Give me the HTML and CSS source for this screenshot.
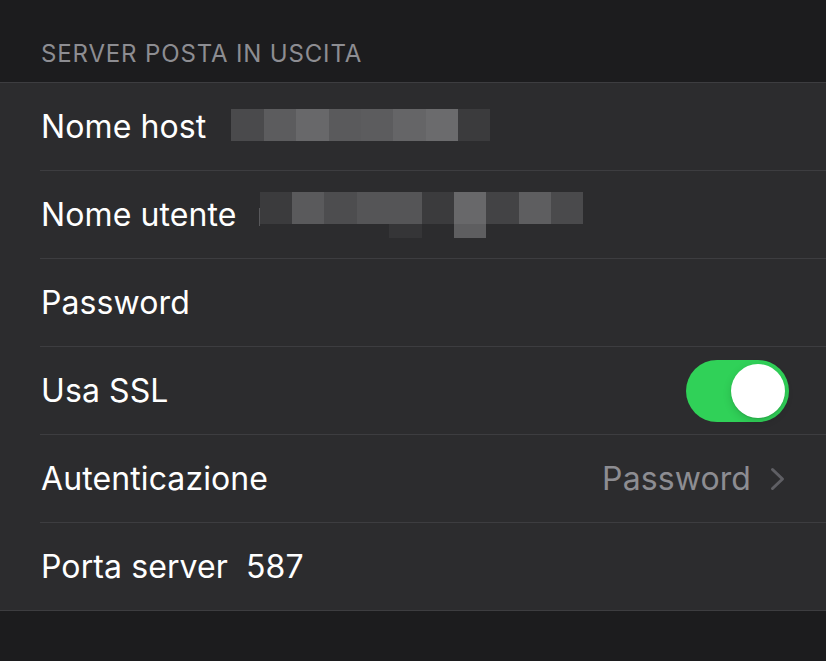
FILE: index.html
```html
<!DOCTYPE html>
<html lang="it">
<head>
  <meta charset="UTF-8" />
  <meta name="viewport" content="width=device-width, initial-scale=1.0"/>
  <title>Server posta in uscita</title>
  <link rel="stylesheet" href="styles.css">
</head>
<body>
  <div class="section-header">SERVER POSTA IN USCITA</div>
  <div class="group">
    <div class="row">
      <div class="row-inner">
        <span class="label">Nome host</span>
        <span class="blur blur-host">
          <i class="px s4"></i><i class="px s8"></i><i class="px s11"></i><i class="px s7"></i><i class="px s8"></i><i class="px s10"></i><i class="px s12"></i><i class="px s2"></i>
        </span>
      </div>
    </div>
    <div class="row">
      <div class="row-inner">
        <span class="label">Nome utente</span>
        <span class="blur blur-user">
          <span class="caret"></span>
          <span class="px-line">
            <i class="px s2"></i><i class="px s7"></i><i class="px s5"></i><i class="px s6"></i><i class="px s6"></i><i class="px s2"></i><i class="px s11"></i><i class="px s3"></i><i class="px s9"></i><i class="px s4"></i>
          </span>
          <span class="px-tail">
            <i class="px-short s1 off-4"></i><i class="px-short s9 off-6"></i>
          </span>
        </span>
      </div>
    </div>
    <div class="row">
      <div class="row-inner">
        <span class="label">Password</span>
      </div>
    </div>
    <div class="row">
      <div class="row-inner">
        <span class="label">Usa SSL</span>
        <span class="toggle on"><span class="knob"></span></span>
      </div>
    </div>
    <div class="row">
      <div class="row-inner">
        <span class="label">Autenticazione</span>
        <span class="detail">Password</span>
        <svg class="chevron" width="16" height="24" viewBox="0 0 16 24">
          <path d="M2.5 2.5 L12.5 12 L2.5 21.5" fill="none" stroke="#5f5f64" stroke-width="3" stroke-linecap="round" stroke-linejoin="round"/>
        </svg>
      </div>
    </div>
    <div class="row last">
      <div class="row-inner">
        <span class="label">Porta server</span>
        <span class="value">587</span>
      </div>
    </div>
  </div>
</body>
</html>
```

FILE: styles.css
```css
* {
  box-sizing: border-box;
  font-family: Inter, "Noto Sans", sans-serif;
}

body {
  background-color: #1c1c1e;
  margin: 0;
  padding: 0;
  color: #ffffff;
}

.section-header {
  padding: 39px 0 0 41px;
  height: 82px;
  font-size: 24px;
  color: #8d8d92;
  letter-spacing: 0.85px;
}

.group {
  background-color: #2c2c2e;
  border-top: 1px solid #3d3d40;
  border-bottom: 1px solid #3d3d40;
}

.row {
  padding-left: 40px;
}

.row-inner {
  display: flex;
  align-items: center;
  height: 88px;
  padding-right: 37px;
  border-bottom: 1px solid #3d3d40;
}

.row.last .row-inner {
  height: 87px;
  border-bottom: none;
}

.label {
  font-size: 32px;
  padding-left: 1px;
  letter-spacing: 0.1px;
}

.value {
  font-size: 32px;
  letter-spacing: 0.1px;
  margin-left: 18px;
}

.detail {
  margin-left: auto;
  font-size: 32px;
  letter-spacing: 0.1px;
  color: #8d8d92;
}

.chevron {
  margin-left: 19px;
  margin-right: 3px;
}

.blur {
  display: flex;
}

.blur-host {
  margin-left: 25px;
  margin-top: -3px;
}

.blur-user {
  position: relative;
  margin-left: 23px;
  flex-direction: column;
}

.px-line {
  display: flex;
}

.px-tail {
  display: flex;
  height: 14px;
}

.px {
  display: block;
  width: 32.4px;
  height: 32px;
}

.px-short {
  display: block;
  width: 32.4px;
  height: 14px;
}

.off-4 {
  margin-left: 129.6px;
}

.off-6 {
  margin-left: 32.4px;
}

.caret {
  position: absolute;
  left: -1px;
  top: 16px;
  width: 1px;
  height: 18px;
  background-color: #58585b;
}

.s1 { background-color: #353537; }
.s2 { background-color: #3b3b3d; }
.s3 { background-color: #434345; }
.s4 { background-color: #4a4a4c; }
.s5 { background-color: #4d4d4f; }
.s6 { background-color: #555557; }
.s7 { background-color: #5a5a5c; }
.s8 { background-color: #5c5c5e; }
.s9 { background-color: #5e5e60; }
.s10 { background-color: #656567; }
.s11 { background-color: #68686a; }
.s12 { background-color: #6b6b6d; }

.toggle {
  margin-left: auto;
  width: 103px;
  height: 62px;
  border-radius: 31px;
  background-color: #e9e9ea;
  position: relative;
}

.toggle.on {
  background-color: #30d158;
}

.knob {
  position: absolute;
  top: 4px;
  right: 4px;
  width: 54px;
  height: 54px;
  border-radius: 50%;
  background-color: #ffffff;
  box-shadow: 0 3px 8px rgba(0, 0, 0, 0.15), 0 1px 1px rgba(0, 0, 0, 0.1);
}
```
